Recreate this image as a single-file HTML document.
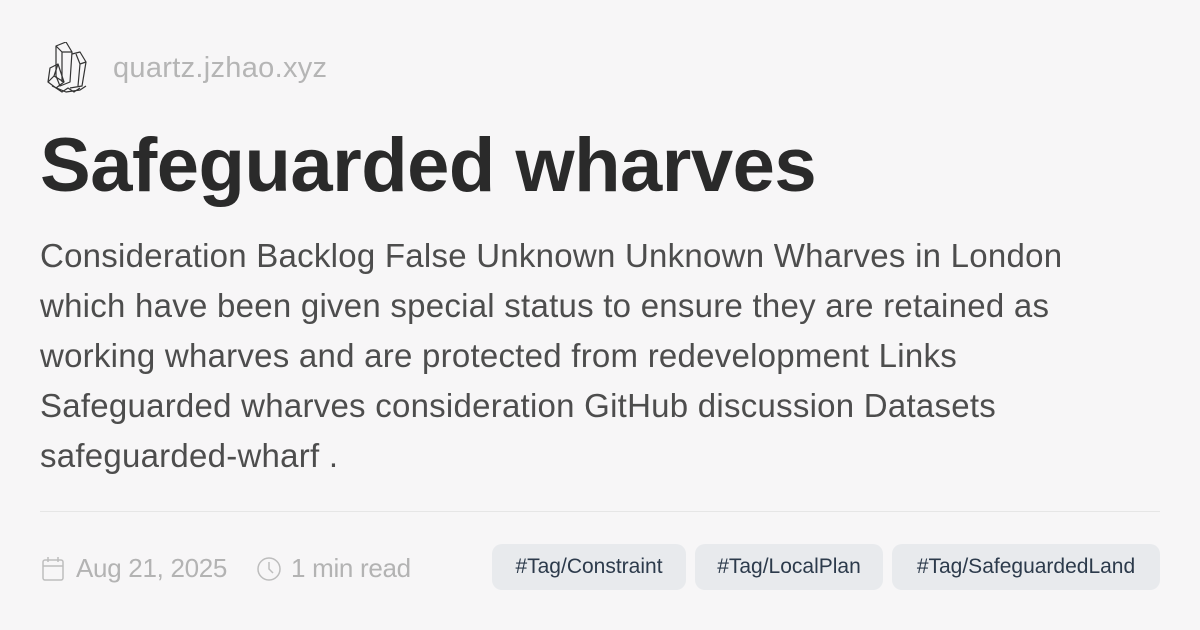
<!DOCTYPE html>
<html><head><meta charset="utf-8"><style>
*{margin:0;padding:0;box-sizing:border-box}
body{width:1200px;height:630px;background:#f7f6f7;font-family:"Liberation Sans",sans-serif;position:relative;overflow:hidden}
.site{position:absolute;left:113px;top:52px;font-size:29px;color:#b5b5b5;letter-spacing:0.3px}
.logo{position:absolute;left:46px;top:42px}
h1{position:absolute;left:40px;top:122px;font-size:76px;font-weight:bold;color:#2a2a2a;letter-spacing:-0.5px;white-space:nowrap}
.desc{position:absolute;left:40px;top:231px;font-size:33px;line-height:50px;color:#4d4d4d;white-space:nowrap;letter-spacing:0.25px}
.hr{position:absolute;left:40px;top:511px;width:1120px;height:1px;background:#e6e6e6}
.meta{position:absolute;top:553px;font-size:26px;color:#b3b3b3;letter-spacing:-0.3px}
.tag{position:absolute;top:544px;height:46px;background:#e8eaed;border-radius:10px;color:#2c3a4b;font-size:21px;line-height:46px;text-align:center}
</style></head><body>
<svg class="logo" width="42" height="52" viewBox="0 0 42 52" fill="none" stroke="#333" stroke-width="1.2" stroke-linejoin="round">
<path d="M10 4 L20 0 L26 10 L24 40 L14 44 L10 34 Z"/><path d="M10 4 L16 10 L26 10 M16 10 L16 40"/>
<path d="M26 12 L34 10 L40 20 L36 44 L24 46"/><path d="M30 12 L34 22 L40 20 M34 22 L32 44"/>
<path d="M4 26 L12 22 L18 40 L10 46 L2 40 Z"/><path d="M12 22 L8 34 L18 40 M8 34 L2 40"/>
<path d="M6 44 L20 50 L34 48 L40 44 M10 46 L16 50 L22 46 L28 50 L34 46"/>
</svg>
<div class="site">quartz.jzhao.xyz</div>
<h1>Safeguarded wharves</h1>
<div class="desc">Consideration Backlog False Unknown Unknown Wharves in London<br>which have been given special status to ensure they are retained as<br>working wharves and are protected from redevelopment Links<br>Safeguarded wharves consideration GitHub discussion Datasets<br>safeguarded-wharf .</div>
<div class="hr"></div>
<svg style="position:absolute;left:41px;top:556px" width="24" height="26" viewBox="0 0 24 26" fill="none" stroke="#bdbdbd" stroke-width="1.5"><rect x="2" y="4" width="20" height="20" rx="2"/><path d="M2 10 H22 M7 1 V6 M17 1 V6"/></svg>
<div class="meta" style="left:76px">Aug 21, 2025</div>
<svg style="position:absolute;left:256px;top:556px" width="26" height="26" viewBox="0 0 26 26" fill="none" stroke="#bdbdbd" stroke-width="1.5"><circle cx="13" cy="13" r="11"/><path d="M13 6 V13 L17 17"/></svg>
<div class="meta" style="left:291px">1 min read</div>
<div class="tag" style="left:492px;width:194px">#Tag/Constraint</div>
<div class="tag" style="left:695px;width:188px">#Tag/LocalPlan</div>
<div class="tag" style="left:892px;width:268px">#Tag/SafeguardedLand</div>
</body></html>
